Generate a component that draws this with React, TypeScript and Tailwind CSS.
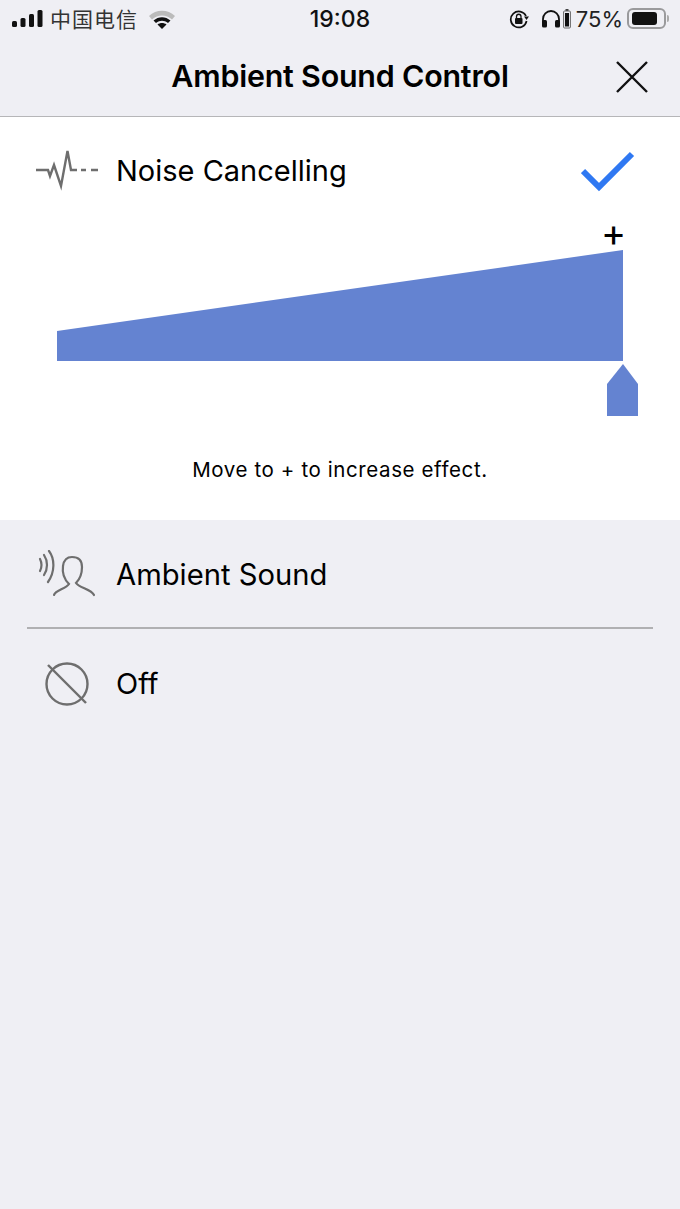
import React from "react";

const font = { fontFamily: 'Inter, "Noto Sans CJK SC", sans-serif' };

function StatusBar() {
  return (
    <div className="flex h-[37px] items-center justify-between pl-[12px] pr-[11px] text-[#111] relative">
      <div className="flex items-center">
        {/* signal bars */}
        <svg width="31" height="19" viewBox="0 0 31 19" fill="#111">
          <rect x="0" y="12" width="5" height="6" rx="1.5" />
          <rect x="8.5" y="9" width="5" height="9" rx="1.5" />
          <rect x="17" y="5" width="5" height="13" rx="1.5" />
          <rect x="25.5" y="1" width="5" height="17" rx="1.5" />
        </svg>
        <span className="ml-[7px] text-[21px] leading-none tracking-[1px] text-[#333]" style={{ fontFamily: '"Noto Sans CJK SC", sans-serif', fontWeight: 400 }}>中国电信</span>
        {/* wifi */}
        <svg className="ml-[10px]" width="28" height="20" viewBox="0 0 28 20">
          <path d="M1 7 C8 0 20 0 27 7 L24 10.5 C18 5 10 5 4 10.5 Z" fill="#bbb" />
          <path d="M5.5 11.5 C10.5 7 17.5 7 22.5 11.5 L20 14 C16 11 12 11 8 14 Z" fill="#111" />
          <path d="M9.5 15.5 C12 13.5 16 13.5 18.5 15.5 L14 20 Z" fill="#111" />
        </svg>
      </div>
      <span className="absolute left-0 right-0 top-[8px] text-center text-[23px] font-medium leading-none">19:08</span>
      <div className="flex items-center">
        {/* rotation lock */}
        <svg width="20" height="20" viewBox="0 0 20 20" fill="none">
          <path d="M17 7 A8 8 0 1 0 17.6 12" stroke="#111" strokeWidth="1.7" />
          <path d="M15 7.5 L20 7.5 L17.5 11 Z" fill="#111" />
          <rect x="6" y="9" width="7.5" height="6" rx="1" fill="#111" />
          <path d="M7.5 9 V7.5 A2.2 2.2 0 0 1 12 7.5 V9" stroke="#111" strokeWidth="1.3" />
        </svg>
        {/* headphones */}
        <svg className="ml-[12px]" width="20" height="18" viewBox="0 0 20 18" fill="none">
          <path d="M2 13 V9 A8 8 0 0 1 18 9 V13" stroke="#111" strokeWidth="1.8" />
          <rect x="1" y="10" width="5" height="7.5" rx="1.5" fill="#111" />
          <rect x="14" y="10" width="5" height="7.5" rx="1.5" fill="#111" />
        </svg>
        {/* headphone battery */}
        <svg className="ml-[2px]" width="8" height="20" viewBox="0 0 8 20" fill="none">
          <rect x="2.5" y="0" width="3" height="2" fill="#444" />
          <rect x="0.6" y="2" width="6.8" height="17" rx="1" stroke="#666" strokeWidth="1" />
          <rect x="2" y="4" width="4" height="13.5" fill="#111" />
        </svg>
        <span className="ml-[5px] text-[22px] leading-none text-[#222]">75%</span>
        {/* battery */}
        <div className="ml-[4px] flex items-center">
          <div className="flex h-[21px] w-[39px] items-center rounded-[6px] border-2 border-[#9a9a9c] px-[3px]">
            <div className="h-[13px] w-[25px] rounded-[3px] bg-[#111]" />
          </div>
          <div className="ml-[1px] h-[7px] w-[2px] rounded-r-full bg-[#aaa]" />
        </div>
      </div>
    </div>
  );
}

function NoiseIcon() {
  return (
    <svg width="64" height="44" viewBox="0 0 64 44" fill="none" stroke="#6e6e6e" strokeWidth="2.4">
      <path d="M0 22 H12 L14 28 L18 17 L25 38 L31.5 3 L35 22 H41" />
      <path d="M45 22 H50 M55 22 H62" />
    </svg>
  );
}

function AmbientIcon() {
  return (
    <svg width="58" height="48" viewBox="0 0 58 48" fill="none" stroke="#6e6e6e" strokeWidth="2.2" strokeLinecap="round">
      <path d="M2 9 C4 13 4 17 2 21" />
      <path d="M6 5 C10 11 10 19 6 25" />
      <path d="M11 1 C17 9 17 22 10 32" />
      <path d="M16 45 C17 40 28 39 31 34 C26 29 24 23 25 16 C26 9 30 7 34 7 C39 7 44 9 44 17 C44 24 42 29 38 33 C41 38 53 39 56 45" />
    </svg>
  );
}

function OffIcon() {
  return (
    <svg width="44" height="44" viewBox="0 0 44 44" fill="none" stroke="#6e6e6e" strokeWidth="2.4">
      <circle cx="22" cy="22" r="20.5" />
      <path d="M3 3 L41 41" />
    </svg>
  );
}

export default function App() {
  return (
    <div className="flex min-h-[1209px] flex-col bg-[#efeff4] text-black" style={font}>
      <StatusBar />
      <header className="relative flex h-[80px] items-center justify-center border-b border-[#b6b6b8]">
        <h1 className="text-[30.4px] font-semibold leading-none tracking-[-0.2px]">Ambient Sound Control</h1>
        <button className="absolute right-[32px] top-[24px]" aria-label="Close">
          <svg width="32" height="32" viewBox="0 0 32 32" stroke="#111" strokeWidth="2.4" fill="none">
            <path d="M1 1 L31 31 M31 1 L1 31" />
          </svg>
        </button>
      </header>

      <section className="flex h-[403px] flex-col bg-white">
        <div className="flex items-center pl-[36px] pr-[45px] pt-[31px]">
          <NoiseIcon />
          <span className="ml-[17px] -translate-x-px text-[29px] leading-none">Noise Cancelling</span>
          <svg className="ml-auto translate-y-[2px]" width="54" height="42" viewBox="0 0 54 42" fill="none" stroke="#2f78f2" strokeWidth="6">
            <path d="M2 20 L18 36 L51 3" />
          </svg>
        </div>

        <div className="relative mt-[12px] h-[208px] px-[57px]">
          <span className="absolute left-[601px] top-[9px] text-[38px] font-normal leading-none">+</span>
          <svg className="absolute left-[57px] top-[46px]" width="582" height="168" viewBox="0 0 582 168" fill="#6483d1">
            <polygon points="0,81 566,0 566,111 0,111" />
            <polygon points="550,134 566,114 581,134 581,166 550,166" />
          </svg>
        </div>

        <p className="mt-[48px] text-center text-[20.5px] leading-none tracking-[0.6px]">Move to + to increase effect.</p>
      </section>

      <div className="flex flex-col px-[27px]">
        <div className="flex h-[109px] items-center border-b-2 border-[#b0b0b2] pl-[11px]">
          <AmbientIcon />
          <span className="ml-[20px] translate-y-px text-[29.2px] leading-none">Ambient Sound</span>
        </div>
        <div className="flex h-[109px] items-center pl-[18px]">
          <OffIcon />
          <span className="ml-[27px] text-[29px] leading-none">Off</span>
        </div>
      </div>
    </div>
  );
}
